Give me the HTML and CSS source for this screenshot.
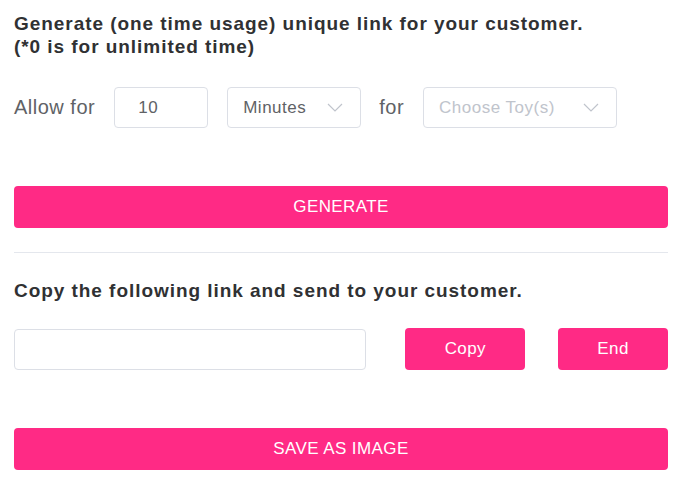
FILE: index.html
```html
<!DOCTYPE html>
<html>
<head>
<meta charset="utf-8">
<link rel="stylesheet" href="styles.css">
</head>
<body>
<div class="panel">
  <h2 class="title">Generate (one time usage) unique link for your customer.<br>(*0 is for unlimited time)</h2>
  <div class="row">
    <span class="label">Allow for</span>
    <div class="field num">10</div>
    <div class="field select minutes"><span>Minutes</span>
      <svg class="chev" width="16" height="9" viewBox="0 0 16 9"><path d="M1 1 L8 8 L15 1" fill="none" stroke="#c0c4cc" stroke-width="1.2"/></svg>
    </div>
    <span class="label">for</span>
    <div class="field select toys"><span class="ph">Choose Toy(s)</span>
      <svg class="chev" width="16" height="9" viewBox="0 0 16 9"><path d="M1 1 L8 8 L15 1" fill="none" stroke="#c0c4cc" stroke-width="1.2"/></svg>
    </div>
  </div>
  <button class="btn wide gen">GENERATE</button>
  <hr class="divider">
  <h3 class="subtitle">Copy the following link and send to your customer.</h3>
  <div class="linkrow">
    <div class="field link"></div>
    <button class="btn copy">Copy</button>
    <button class="btn end">End</button>
  </div>
  <button class="btn wide save">SAVE AS IMAGE</button>
</div>
</body>
</html>
```

FILE: styles.css
```css
html, body {
  margin: 0;
  padding: 0;
  background: #ffffff;
}
body {
  font-family: "Liberation Sans", Arial, sans-serif;
}
.panel {
  width: 654px;
  padding: 12px 10px 0 14px;
  display: flex;
  flex-direction: column;
}
.title {
  margin: 0;
  font-size: 19px;
  line-height: 23px;
  letter-spacing: 0.95px;
  font-weight: bold;
  color: #303133;
}
.row {
  display: flex;
  align-items: center;
  margin-top: 29px;
  height: 41px;
}
.label {
  font-size: 20px;
  letter-spacing: 0.5px;
  color: #606266;
}
.field {
  box-sizing: border-box;
  border: 1px solid #dcdfe6;
  border-radius: 4px;
  height: 41px;
  background: #fff;
  display: flex;
  align-items: center;
  font-size: 17px;
  letter-spacing: 0.5px;
  color: #606266;
}
.num {
  width: 94px;
  margin-left: 19px;
  padding-left: 23px;
}
.select {
  justify-content: space-between;
  padding: 0 17px 0 15px;
}
.minutes {
  width: 134px;
  margin: 0 18px 0 19px;
}
.toys {
  width: 194px;
  margin-left: 19px;
}
.ph {
  color: #c0c4cc;
}
.chev {
  display: block;
}
.btn {
  box-sizing: border-box;
  border: none;
  border-radius: 4px;
  background: #ff2a85;
  color: #ffffff;
  font-family: "Liberation Sans", Arial, sans-serif;
  font-size: 17px;
  letter-spacing: 0.4px;
  height: 42px;
  padding: 0;
}
.wide {
  width: 654px;
}
.gen {
  margin-top: 58px;
}
.divider {
  border: none;
  border-top: 1px solid #e4e7ed;
  margin: 24px 0 0 0;
  width: 654px;
}
.subtitle {
  margin: 26px 0 0 0;
  font-size: 19px;
  line-height: 23px;
  letter-spacing: 0.95px;
  font-weight: bold;
  color: #303133;
}
.linkrow {
  display: flex;
  align-items: center;
  margin-top: 26px;
}
.link {
  width: 353px;
}
.copy {
  width: 120px;
  margin-left: 39px;
}
.end {
  width: 110px;
  margin-left: 33px;
}
.save {
  margin-top: 58px;
}
```
